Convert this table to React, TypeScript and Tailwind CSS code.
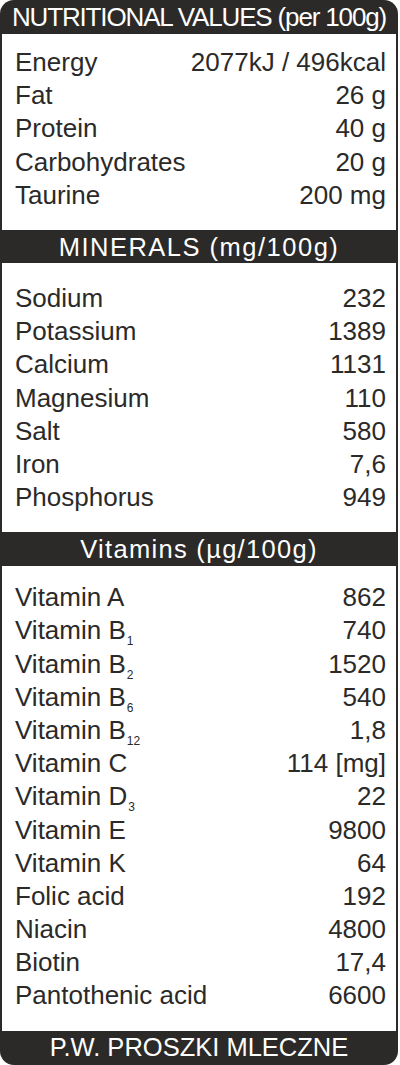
import React from "react";

type Row = { label: React.ReactNode; value: string };

const Sub = ({ children }: { children: React.ReactNode }) => (
  <span className="relative top-[6px] ml-[1px] text-[12px] leading-none">{children}</span>
);

const nutrition: Row[] = [
  { label: "Energy", value: "2077kJ / 496kcal" },
  { label: "Fat", value: "26 g" },
  { label: "Protein", value: "40 g" },
  { label: "Carbohydrates", value: "20 g" },
  { label: "Taurine", value: "200 mg" },
];

const minerals: Row[] = [
  { label: "Sodium", value: "232" },
  { label: "Potassium", value: "1389" },
  { label: "Calcium", value: "1131" },
  { label: "Magnesium", value: "110" },
  { label: "Salt", value: "580" },
  { label: "Iron", value: "7,6" },
  { label: "Phosphorus", value: "949" },
];

const vitamins: Row[] = [
  { label: "Vitamin A", value: "862" },
  { label: <>Vitamin B<Sub>1</Sub></>, value: "740" },
  { label: <>Vitamin B<Sub>2</Sub></>, value: "1520" },
  { label: <>Vitamin B<Sub>6</Sub></>, value: "540" },
  { label: <>Vitamin B<Sub>12</Sub></>, value: "1,8" },
  { label: "Vitamin C", value: "114 [mg]" },
  { label: <>Vitamin D<Sub>3</Sub></>, value: "22" },
  { label: "Vitamin E", value: "9800" },
  { label: "Vitamin K", value: "64" },
  { label: "Folic acid", value: "192" },
  { label: "Niacin", value: "4800" },
  { label: "Biotin", value: "17,4" },
  { label: "Pantothenic acid", value: "6600" },
];

function Rows({ rows }: { rows: Row[] }) {
  return (
    <div className="flex flex-col">
      {rows.map((r, i) => (
        <div key={i} className="flex h-[33.2px] items-center justify-between leading-[33.2px]">
          <span className="whitespace-nowrap">{r.label}</span>
          <span className="whitespace-nowrap">{r.value}</span>
        </div>
      ))}
    </div>
  );
}

export default function App() {
  return (
    <div className="min-h-[1065px] bg-white">
      <div className="flex w-[398px] flex-col overflow-hidden rounded-[14px] bg-[#2b2a29] font-['Liberation_Sans',Arial,sans-serif] text-[#2b2a29]">
        <div className="flex h-[34px] items-center justify-center text-[26px] leading-none tracking-[-1.15px] text-white">
          NUTRITIONAL VALUES (per 100g)
        </div>
        <div className="mx-[2px] bg-white pl-[13px] pr-[10px] pt-[12px] pb-[18px] text-[26px]">
          <Rows rows={nutrition} />
        </div>
        <div className="flex h-[33px] items-center justify-center pt-[3px] text-[25.5px] leading-none tracking-[1.5px] text-white">
          MINERALS (mg/100g)
        </div>
        <div className="mx-[2px] bg-white pl-[13px] pr-[10px] pt-[19px] pb-[17.6px] text-[26px]">
          <Rows rows={minerals} />
        </div>
        <div className="flex h-[34px] items-center justify-center pt-[1px] text-[25.5px] leading-none tracking-[1.3px] text-white">
          Vitamins (µg/100g)
        </div>
        <div className="mx-[2px] bg-white pl-[13px] pr-[10px] pt-[15.4px] pb-[18px] text-[26px]">
          <Rows rows={vitamins} />
        </div>
        <div className="flex h-[34px] items-center justify-center text-[25.5px] leading-none text-white">
          P.W. PROSZKI MLECZNE
        </div>
      </div>
    </div>
  );
}
